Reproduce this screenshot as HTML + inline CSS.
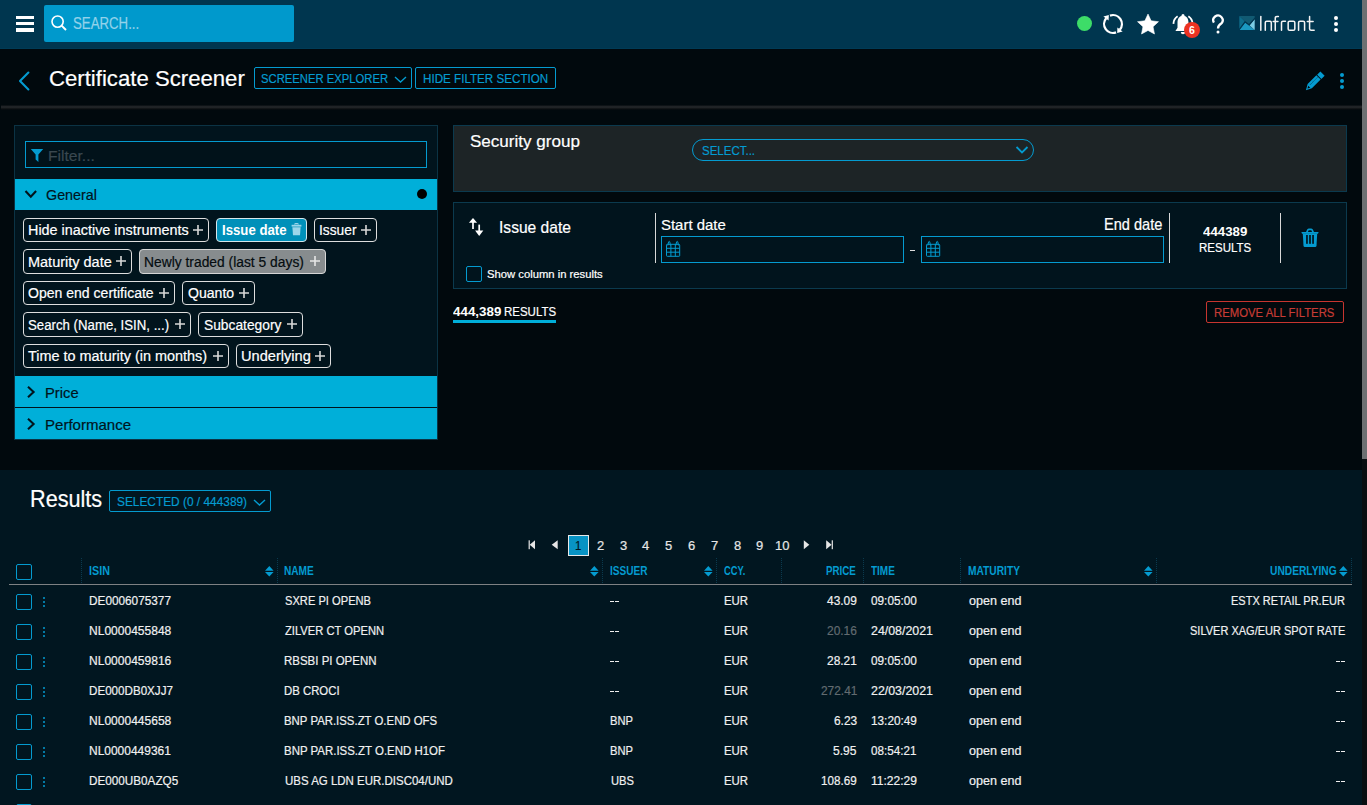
<!DOCTYPE html>
<html><head><meta charset="utf-8"><title>Certificate Screener</title>
<style>
html,body{margin:0;padding:0;}
body{width:1367px;height:805px;overflow:hidden;position:relative;background:#01090d;font-family:"Liberation Sans", sans-serif;}
.t{position:absolute;white-space:nowrap;line-height:normal;font-family:"Liberation Sans", sans-serif;-webkit-text-stroke:0.2px currentColor;}
.b{-webkit-text-stroke:0;}
svg{overflow:visible;}
</style></head><body>
<div style="position:absolute;left:0px;top:0px;width:1362px;height:49px;background:#00364f;"></div>
<div style="position:absolute;left:0px;top:48px;width:1362px;height:1px;background:#003b56;"></div>
<div style="position:absolute;left:16px;top:16.2px;width:18px;height:3.2px;background:#fff;"></div>
<div style="position:absolute;left:16px;top:22.3px;width:18px;height:3.2px;background:#fff;"></div>
<div style="position:absolute;left:16px;top:28.4px;width:18px;height:3.2px;background:#fff;"></div>
<div style="position:absolute;left:44px;top:5px;width:250px;height:37px;background:#0099cc;border-radius:2px;"></div>
<svg style="position:absolute;left:49px;top:14px;" width="20" height="20" viewBox="0 0 20 20"><circle cx="8.6" cy="7.6" r="5.6" fill="none" stroke="#fff" stroke-width="1.6"/><line x1="12.6" y1="11.6" x2="17" y2="16" stroke="#fff" stroke-width="2"/></svg>
<span class="t" style="left:73.40px;transform-origin:0 0;top:15px;font-size:15.7px;font-weight:400;color:#93d2ea;transform:scaleX(0.844);">SEARCH...</span>
<div style="position:absolute;left:1077px;top:16px;width:15px;height:15px;border-radius:50%;background:#3ddc68;"></div>
<svg style="position:absolute;left:1101px;top:12px;" width="24" height="24" viewBox="0 0 24 24"><path d="M8.96 3.64 A8.9 8.9 0 0 1 18.82 17.72" fill="none" stroke="#fff" stroke-width="2.3"/><path d="M15.04 20.36 A8.9 8.9 0 0 1 5.18 6.28" fill="none" stroke="#fff" stroke-width="2.3"/><path d="M16.41 15.45 L21.61 19.51 L16.18 21.10 Z" fill="#fff"/><path d="M7.59 8.55 L2.39 4.49 L7.82 2.90 Z" fill="#fff"/></svg>
<svg style="position:absolute;left:1137px;top:14px;" width="22" height="22" viewBox="0 0 22 22"><path d="M11.00 0.10 L14.12 6.81 L21.46 7.70 L16.04 12.74 L17.47 20.00 L11.00 16.40 L4.53 20.00 L5.96 12.74 L0.54 7.70 L7.88 6.81 Z" fill="#fff" stroke="#fff" stroke-width="0.6" stroke-linejoin="round"/></svg>
<svg style="position:absolute;left:1171px;top:12.8px;" width="26" height="24" viewBox="0 0 26 24"><path d="M12 2.8 C8.2 2.8 6.5 5.9 6.5 9.6 L6.5 14.8 L4.4 18 L19.6 18 L17.5 14.8 L17.5 9.6 C17.5 5.9 15.8 2.8 12 2.8 Z" fill="#fff"/><circle cx="12" cy="2.6" r="1.5" fill="#fff"/><path d="M2.41 10.86 A9.6 9.6 0 0 1 6.63 3.24" fill="none" stroke="#fff" stroke-width="1.8"/><path d="M17.37 3.24 A9.6 9.6 0 0 1 21.59 10.86" fill="none" stroke="#fff" stroke-width="1.8"/><path d="M9.8 19 A2.2 2.2 0 0 0 14.2 19 Z" fill="#fff"/></svg>
<div style="position:absolute;left:1184px;top:22px;width:16px;height:16px;border-radius:50%;background:#ec3222;"></div>
<span class="t b" style="left:1189.25px;transform-origin:0 0;top:23.799999999999997px;font-size:11.05px;font-weight:700;color:#fff;transform:scaleX(0.950);">6</span>
<svg style="position:absolute;left:1210px;top:12px;" width="16" height="24" viewBox="0 0 16 24"><path d="M3.9 10.6 A4.7 4.7 0 1 1 11.6 11.2 Q8 13.2 8 16.4" fill="none" stroke="#fff" stroke-width="2.3"/><circle cx="8" cy="19.9" r="1.5" fill="#fff"/></svg>
<svg style="position:absolute;left:1239px;top:16px;" width="16" height="14" viewBox="0 0 16 14"><path d="M0.3 0 H15.7 V2.2 L10 8.5 L6 5.5 Z" fill="#115a72"/><path d="M0.3 0 L6 5.5 L0.3 13.6 Z" fill="#0e6c8a"/><path d="M0.3 14 L6.2 6.6 L15.7 14 Z" fill="#1b99c1"/><path d="M15.7 3.2 V14 L10.6 9.6 Z" fill="#7ccee5"/><path d="M0 13.8 L6 5.8 L10 8.8 L16 2" fill="none" stroke="#00364f" stroke-width="1.1"/></svg>
<svg style="position:absolute;left:1258px;top:14px;" width="60" height="20" viewBox="0 0 60 20"><g transform="scale(1.04 1)" fill="none" stroke="#f4f4f4" stroke-width="1.45" stroke-linecap="round" stroke-linejoin="round"><path d="M2.7 2.5 V16.3"/><path d="M7 16.3 V8.5 Q7 7.2 8.4 7.2 H11.4 Q12.8 7.2 12.8 8.5 V16.3"/><path d="M16.6 16.3 V4.2 Q16.6 2.5 18.3 2.5 H19.6"/><path d="M14.6 7.5 H19.2"/><path d="M22.6 16.3 V8.5 Q22.6 7.2 24 7.2 H26.4"/><path d="M29 8.5 Q29 7.2 30.4 7.2 H34 Q35.4 7.2 35.4 8.5 V15 Q35.4 16.3 34 16.3 H30.4 Q29 16.3 29 15 Z"/><path d="M39 16.3 V8.5 Q39 7.2 40.4 7.2 H43.4 Q44.8 7.2 44.8 8.5 V16.3"/><path d="M49.6 2.5 V14.8 Q49.6 16.3 51.1 16.3 H54"/><path d="M47.4 7.5 H53"/></g></svg>
<div style="position:absolute;left:1333.8px;top:15.8px;width:4.4px;height:4.4px;border-radius:50%;background:#fff;"></div>
<div style="position:absolute;left:1333.8px;top:21.8px;width:4.4px;height:4.4px;border-radius:50%;background:#fff;"></div>
<div style="position:absolute;left:1333.8px;top:27.8px;width:4.4px;height:4.4px;border-radius:50%;background:#fff;"></div>
<div style="position:absolute;left:1362px;top:0px;width:5px;height:459px;background:#6d7072;"></div>
<div style="position:absolute;left:1362px;top:459px;width:5px;height:346px;background:#090e11;"></div>
<svg style="position:absolute;left:16px;top:70px;" width="16" height="22" viewBox="0 0 16 22"><path d="M12.4 2.6 L4 11 L12.4 19.4" fill="none" stroke="#049bd0" stroke-width="2.1" stroke-linecap="round" stroke-linejoin="round"/></svg>
<span class="t" style="left:49.02px;transform-origin:0 0;top:64.8px;font-size:22.67px;font-weight:400;color:#fff;transform:scaleX(0.978);">Certificate Screener</span>
<div style="position:absolute;left:254px;top:67px;width:158px;height:22px;border:1px solid #049bd0;border-radius:2px;box-sizing:border-box;"></div>
<span class="t" style="left:261.00px;transform-origin:0 0;top:71px;font-size:13.08px;font-weight:400;color:#049bd0;transform:scaleX(0.862);">SCREENER EXPLORER</span>
<svg style="position:absolute;left:394px;top:76px;" width="13" height="8" viewBox="0 0 13 8"><path d="M1 1 L6.5 6 L12 1" fill="none" stroke="#049bd0" stroke-width="1.4"/></svg>
<div style="position:absolute;left:415px;top:67px;width:141px;height:22px;border:1px solid #049bd0;border-radius:2px;box-sizing:border-box;"></div>
<span class="t" style="left:422.51px;transform-origin:0 0;top:71px;font-size:13.08px;font-weight:400;color:#049bd0;transform:scaleX(0.890);">HIDE FILTER SECTION</span>
<svg style="position:absolute;left:1302.6px;top:71.3px;" width="22" height="22" viewBox="0 0 22 22"><g transform="rotate(45 11 11)"><rect x="8" y="-1" width="6" height="4.6" fill="#049bd0"/><path d="M8 4.6 H14 V17 L11 22.5 L8 17 Z" fill="#049bd0"/><path d="M9.6 17.8 L11 20.2 L12.4 17.8 Z" fill="#01090d"/><line x1="10.2" y1="5.5" x2="10.2" y2="16" stroke="#01090d" stroke-width="0.6" stroke-dasharray="0.8 0.8"/></g></svg>
<div style="position:absolute;left:1340px;top:73px;width:4.2px;height:4.2px;border-radius:50%;background:#049bd0;"></div>
<div style="position:absolute;left:1340px;top:79px;width:4.2px;height:4.2px;border-radius:50%;background:#049bd0;"></div>
<div style="position:absolute;left:1340px;top:85px;width:4.2px;height:4.2px;border-radius:50%;background:#049bd0;"></div>
<div style="position:absolute;left:1px;top:105px;width:1361px;height:5px;background:linear-gradient(#01090d 0px,#1a1d20 1px,#25292c 2px,#1a1d1f 3px,#0a0e11 4px,#01090d 5px);"></div>
<div style="position:absolute;left:14px;top:125px;width:424px;height:315px;background:#01141d;border:1px solid #0b3344;box-sizing:border-box;"></div>
<div style="position:absolute;left:25px;top:141px;width:402px;height:27px;border:1px solid #049bd0;box-sizing:border-box;background:#01121a;"></div>
<svg style="position:absolute;left:30px;top:148px;" width="14" height="15" viewBox="0 0 14 15"><path d="M0.8 1 H13.2 L8.4 6.6 V14 L5.6 11.6 V6.6 Z" fill="#049bd0"/></svg>
<span class="t" style="left:47.69px;transform-origin:0 0;top:147px;font-size:15.41px;font-weight:400;color:#3a4850;transform:scaleX(1.013);">Filter...</span>
<div style="position:absolute;left:15px;top:179px;width:422px;height:31px;background:#00afd9;"></div>
<svg style="position:absolute;left:24px;top:189px;" width="14" height="11" viewBox="0 0 14 11"><path d="M1.5 2 L6.8 7.6 L12.1 2" fill="none" stroke="#01141d" stroke-width="2.1"/></svg>
<span class="t" style="left:45.70px;transform-origin:0 0;top:185.8px;font-size:15.41px;font-weight:400;color:#01141d;transform:scaleX(0.930);">General</span>
<div style="position:absolute;left:417px;top:189px;width:10px;height:10px;border-radius:50%;background:#000;"></div>
<div style="position:absolute;left:23px;top:218px;width:186px;height:24px;border:1px solid #dedede;border-radius:4px;box-sizing:border-box;"></div>
<span class="t" style="left:27.73px;transform-origin:0 0;top:222px;font-size:14.83px;font-weight:400;color:#fff;transform:scaleX(0.970);">Hide inactive instruments</span>
<svg style="position:absolute;left:193px;top:225px;" width="10" height="10" viewBox="0 0 10 10"><path d="M0 5 H10 M5 0 V10" stroke="#d8d8d8" stroke-width="1.6"/></svg>
<div style="position:absolute;left:216px;top:218px;width:91px;height:24px;background:#0090b9;border:1px solid #d6e6ea;border-radius:4px;box-sizing:border-box;"></div>
<span class="t b" style="left:221.50px;transform-origin:0 0;top:222px;font-size:14.83px;font-weight:700;color:#fff;transform:scaleX(0.891);">Issue date</span>
<svg style="position:absolute;left:291px;top:223px;" width="11" height="13" viewBox="0 0 11 13"><path d="M3.6 1.6 Q3.6 0.6 4.6 0.6 H6.4 Q7.4 0.6 7.4 1.6" fill="none" stroke="#9cd6ea" stroke-width="1.1"/><rect x="0.6" y="1.8" width="9.8" height="1.8" fill="#9cd6ea"/><path d="M1.4 4.2 H9.6 L9 12.2 H2 Z" fill="#9cd6ea"/></svg>
<div style="position:absolute;left:314px;top:218px;width:63px;height:24px;border:1px solid #dedede;border-radius:4px;box-sizing:border-box;"></div>
<span class="t" style="left:318.87px;transform-origin:0 0;top:222px;font-size:14.83px;font-weight:400;color:#fff;transform:scaleX(0.928);">Issuer</span>
<svg style="position:absolute;left:361px;top:225px;" width="10" height="10" viewBox="0 0 10 10"><path d="M0 5 H10 M5 0 V10" stroke="#d8d8d8" stroke-width="1.6"/></svg>
<div style="position:absolute;left:23px;top:249px;width:109px;height:25px;border:1px solid #dedede;border-radius:4px;box-sizing:border-box;"></div>
<span class="t" style="left:27.72px;transform-origin:0 0;top:253.5px;font-size:14.83px;font-weight:400;color:#fff;transform:scaleX(0.977);">Maturity date</span>
<svg style="position:absolute;left:116px;top:256px;" width="10" height="10" viewBox="0 0 10 10"><path d="M0 5 H10 M5 0 V10" stroke="#d8d8d8" stroke-width="1.6"/></svg>
<div style="position:absolute;left:139px;top:249px;width:187px;height:25px;background:#878c8e;border:1px solid #d6d6d6;border-radius:4px;box-sizing:border-box;"></div>
<span class="t" style="left:144.07px;transform-origin:0 0;top:253.5px;font-size:14.83px;font-weight:400;color:#050c10;transform:scaleX(0.933);">Newly traded (last 5 days)</span>
<svg style="position:absolute;left:310px;top:256px;" width="10" height="10" viewBox="0 0 10 10"><path d="M0 5 H10 M5 0 V10" stroke="#e6e6e6" stroke-width="1.6"/></svg>
<div style="position:absolute;left:23px;top:281px;width:152px;height:24px;border:1px solid #dedede;border-radius:4px;box-sizing:border-box;"></div>
<span class="t" style="left:28.30px;transform-origin:0 0;top:285px;font-size:14.83px;font-weight:400;color:#fff;transform:scaleX(0.947);">Open end certificate</span>
<svg style="position:absolute;left:159px;top:288px;" width="10" height="10" viewBox="0 0 10 10"><path d="M0 5 H10 M5 0 V10" stroke="#d8d8d8" stroke-width="1.6"/></svg>
<div style="position:absolute;left:182px;top:281px;width:73px;height:24px;border:1px solid #dedede;border-radius:4px;box-sizing:border-box;"></div>
<span class="t" style="left:187.60px;transform-origin:0 0;top:285px;font-size:14.83px;font-weight:400;color:#fff;transform:scaleX(0.948);">Quanto</span>
<svg style="position:absolute;left:239px;top:288px;" width="10" height="10" viewBox="0 0 10 10"><path d="M0 5 H10 M5 0 V10" stroke="#d8d8d8" stroke-width="1.6"/></svg>
<div style="position:absolute;left:23px;top:312px;width:168px;height:25px;border:1px solid #dedede;border-radius:4px;box-sizing:border-box;"></div>
<span class="t" style="left:28.30px;transform-origin:0 0;top:316.5px;font-size:14.83px;font-weight:400;color:#fff;transform:scaleX(0.892);">Search (Name, ISIN, ...)</span>
<svg style="position:absolute;left:175px;top:319px;" width="10" height="10" viewBox="0 0 10 10"><path d="M0 5 H10 M5 0 V10" stroke="#d8d8d8" stroke-width="1.6"/></svg>
<div style="position:absolute;left:198px;top:312px;width:105px;height:25px;border:1px solid #dedede;border-radius:4px;box-sizing:border-box;"></div>
<span class="t" style="left:203.80px;transform-origin:0 0;top:316.5px;font-size:14.83px;font-weight:400;color:#fff;transform:scaleX(0.930);">Subcategory</span>
<svg style="position:absolute;left:287px;top:319px;" width="10" height="10" viewBox="0 0 10 10"><path d="M0 5 H10 M5 0 V10" stroke="#d8d8d8" stroke-width="1.6"/></svg>
<div style="position:absolute;left:23px;top:344px;width:206px;height:24px;border:1px solid #dedede;border-radius:4px;box-sizing:border-box;"></div>
<span class="t" style="left:28.30px;transform-origin:0 0;top:348px;font-size:14.83px;font-weight:400;color:#fff;transform:scaleX(0.973);">Time to maturity (in months)</span>
<svg style="position:absolute;left:213px;top:351px;" width="10" height="10" viewBox="0 0 10 10"><path d="M0 5 H10 M5 0 V10" stroke="#d8d8d8" stroke-width="1.6"/></svg>
<div style="position:absolute;left:236px;top:344px;width:95px;height:24px;border:1px solid #dedede;border-radius:4px;box-sizing:border-box;"></div>
<span class="t" style="left:240.52px;transform-origin:0 0;top:348px;font-size:14.83px;font-weight:400;color:#fff;transform:scaleX(0.984);">Underlying</span>
<svg style="position:absolute;left:315px;top:351px;" width="10" height="10" viewBox="0 0 10 10"><path d="M0 5 H10 M5 0 V10" stroke="#d8d8d8" stroke-width="1.6"/></svg>
<div style="position:absolute;left:15px;top:376px;width:422px;height:31px;background:#00afd9;"></div>
<div style="position:absolute;left:15px;top:408px;width:422px;height:31px;background:#00afd9;"></div>
<svg style="position:absolute;left:25px;top:385px;" width="12" height="14" viewBox="0 0 12 14"><path d="M3 1.8 L8.6 7 L3 12.2" fill="none" stroke="#01141d" stroke-width="2.1"/></svg>
<span class="t" style="left:44.71px;transform-origin:0 0;top:383.8px;font-size:14.97px;font-weight:400;color:#01141d;transform:scaleX(0.985);">Price</span>
<svg style="position:absolute;left:25px;top:417px;" width="12" height="14" viewBox="0 0 12 14"><path d="M3 1.8 L8.6 7 L3 12.2" fill="none" stroke="#01141d" stroke-width="2.1"/></svg>
<span class="t" style="left:44.69px;transform-origin:0 0;top:415.8px;font-size:14.97px;font-weight:400;color:#01141d;transform:scaleX(1.005);">Performance</span>
<div style="position:absolute;left:453px;top:125px;width:894px;height:67px;background:#1d2426;border:1px solid #0b3a4e;box-sizing:border-box;"></div>
<span class="t" style="left:469.50px;transform-origin:0 0;top:130.9px;font-size:17.3px;font-weight:400;color:#fff;transform:scaleX(0.986);">Security group</span>
<div style="position:absolute;left:692px;top:139px;width:342px;height:22px;border:1px solid #049bd0;border-radius:11px;box-sizing:border-box;"></div>
<span class="t" style="left:701.50px;transform-origin:0 0;top:143.1px;font-size:12.94px;font-weight:400;color:#049bd0;transform:scaleX(0.889);">SELECT...</span>
<svg style="position:absolute;left:1015px;top:145px;" width="14" height="10" viewBox="0 0 14 10"><path d="M1.5 2 L7 7.5 L12.5 2" fill="none" stroke="#049bd0" stroke-width="1.8"/></svg>
<div style="position:absolute;left:453px;top:202px;width:894px;height:87px;background:#01141d;border:1px solid #0b3a4e;box-sizing:border-box;"></div>
<svg style="position:absolute;left:468px;top:217px;" width="16" height="20" viewBox="0 0 16 20"><g fill="#fff"><rect x="4.15" y="4" width="1.7" height="8"/><path d="M0.9 5.8 L5 1 L9.1 5.8 Z"/><rect x="10.35" y="7.6" width="1.7" height="8"/><path d="M7.1 13.6 L11.2 19 L15.3 13.6 Z"/></g></svg>
<span class="t" style="left:498.72px;transform-origin:0 0;top:218.7px;font-size:15.99px;font-weight:400;color:#fff;transform:scaleX(0.976);">Issue date</span>
<div style="position:absolute;left:466px;top:266px;width:16px;height:16px;border:1.5px solid #049bd0;border-radius:2px;box-sizing:border-box;"></div>
<span class="t" style="left:486.50px;transform-origin:0 0;top:267.5px;font-size:11.48px;font-weight:400;color:#fff;transform:scaleX(0.981);">Show column in results</span>
<div style="position:absolute;left:655px;top:213px;width:1px;height:50px;background:#d8d8d8;"></div>
<span class="t" style="left:661.40px;transform-origin:0 0;top:215.8px;font-size:15.26px;font-weight:400;color:#fff;transform:scaleX(0.980);">Start date</span>
<div style="position:absolute;left:661px;top:236px;width:243px;height:27px;border:1px solid #049bd0;box-sizing:border-box;"></div>
<svg style="position:absolute;left:666px;top:240px;" width="15" height="17" viewBox="0 0 15 17"><g fill="none" stroke="#049bd0" stroke-width="1"><rect x="0.5" y="4.3" width="13.2" height="12" rx="0.8"/><line x1="0.5" y1="8.3" x2="13.7" y2="8.3"/><line x1="0.5" y1="12.2" x2="13.7" y2="12.2"/><line x1="4.9" y1="4.3" x2="4.9" y2="16.3"/><line x1="9.3" y1="4.3" x2="9.3" y2="16.3"/><path d="M1.8 5.5 L2.6 1.8 Q3.2 0.8 3.8 1.8 L4.4 5.5"/><path d="M9.8 5.5 L10.6 1.8 Q11.2 0.8 11.8 1.8 L12.4 5.5"/></g></svg>
<div style="position:absolute;left:910px;top:250px;width:5px;height:1.2px;background:#ddd;"></div>
<span class="t" style="left:1104.37px;transform-origin:0 0;top:216px;font-size:15.7px;font-weight:400;color:#fff;transform:scaleX(0.929);">End date</span>
<div style="position:absolute;left:921px;top:236px;width:243px;height:27px;border:1px solid #049bd0;box-sizing:border-box;"></div>
<svg style="position:absolute;left:926px;top:240px;" width="15" height="17" viewBox="0 0 15 17"><g fill="none" stroke="#049bd0" stroke-width="1"><rect x="0.5" y="4.3" width="13.2" height="12" rx="0.8"/><line x1="0.5" y1="8.3" x2="13.7" y2="8.3"/><line x1="0.5" y1="12.2" x2="13.7" y2="12.2"/><line x1="4.9" y1="4.3" x2="4.9" y2="16.3"/><line x1="9.3" y1="4.3" x2="9.3" y2="16.3"/><path d="M1.8 5.5 L2.6 1.8 Q3.2 0.8 3.8 1.8 L4.4 5.5"/><path d="M9.8 5.5 L10.6 1.8 Q11.2 0.8 11.8 1.8 L12.4 5.5"/></g></svg>
<div style="position:absolute;left:1169px;top:213px;width:1px;height:50px;background:#d8d8d8;"></div>
<span class="t b" style="left:1202.90px;transform-origin:0 0;top:224px;font-size:13.08px;font-weight:700;color:#fff;transform:scaleX(1.015);">444389</span>
<span class="t" style="left:1198.60px;transform-origin:0 0;top:239.7px;font-size:12.79px;font-weight:400;color:#fff;transform:scaleX(0.899);">RESULTS</span>
<div style="position:absolute;left:1280px;top:213px;width:1px;height:50px;background:#d8d8d8;"></div>
<svg style="position:absolute;left:1300px;top:228px;" width="20" height="20" viewBox="0 0 20 20"><path d="M6.8 4.4 L7.9 1.9 Q8.3 1.3 9 1.3 H11 Q11.7 1.3 12.1 1.9 L13.2 4.4" fill="none" stroke="#049bd0" stroke-width="1.7"/><path d="M1.4 3.9 H18.6 L18 5.7 H2 Z" fill="#049bd0"/><path d="M2.8 5.5 H17.2 L16.5 17.8 Q16.4 19 15.2 19 H4.8 Q3.6 19 3.5 17.8 Z" fill="#049bd0"/><g fill="#01141d"><rect x="6.1" y="7" width="1.7" height="8.8"/><rect x="9.15" y="7" width="1.7" height="8.8"/><rect x="12.2" y="7" width="1.7" height="8.8"/></g></svg>
<span class="t b" style="left:453.00px;transform-origin:0 0;top:305px;font-size:12.5px;font-weight:700;color:#fff;transform:scaleX(1.072);">444,389</span>
<span class="t" style="left:504.08px;transform-origin:0 0;top:305px;font-size:12.5px;font-weight:400;color:#fff;transform:scaleX(0.919);">RESULTS</span>
<div style="position:absolute;left:453px;top:320px;width:103px;height:3px;background:#00afd9;"></div>
<div style="position:absolute;left:1206px;top:301px;width:138px;height:22px;border:1px solid #c7352f;border-radius:2px;box-sizing:border-box;"></div>
<span class="t" style="left:1214.02px;transform-origin:0 0;top:304.9px;font-size:12.94px;font-weight:400;color:#c63c35;transform:scaleX(0.877);">REMOVE ALL FILTERS</span>
<div style="position:absolute;left:0px;top:470px;width:1362px;height:335px;background:#011620;"></div>
<span class="t" style="left:29.57px;transform-origin:0 0;top:486px;font-size:23.26px;font-weight:400;color:#fff;transform:scaleX(0.931);">Results</span>
<div style="position:absolute;left:109px;top:490px;width:162px;height:22px;border:1px solid #049bd0;border-radius:2px;box-sizing:border-box;"></div>
<span class="t" style="left:116.60px;transform-origin:0 0;top:494px;font-size:12.94px;font-weight:400;color:#049bd0;transform:scaleX(0.918);">SELECTED (0 / 444389)</span>
<svg style="position:absolute;left:253px;top:499px;" width="13" height="8" viewBox="0 0 13 8"><path d="M1 1 L6.5 6 L12 1" fill="none" stroke="#049bd0" stroke-width="1.4"/></svg>
<svg style="position:absolute;left:520px;top:536px;" width="320" height="16" viewBox="0 0 320 16"><g fill="#e6e6e6"><rect x="8.6" y="4.3" width="1.2" height="8.9"/><path d="M15 4.3 L9.7 8.75 L15 13.2 Z"/><path d="M37.7 4.3 L31.7 8.75 L37.7 13.2 Z"/><path d="M283.8 4.3 L289.3 8.75 L283.8 13.2 Z"/><path d="M306.2 4.3 L311.6 8.75 L306.2 13.2 Z"/><rect x="311.7" y="4.3" width="1.2" height="8.9"/></g></svg>
<div style="position:absolute;left:568px;top:535px;width:21px;height:21px;background:#0893c4;border:1px solid #e8e8e8;box-sizing:border-box;"></div>
<span class="t" style="left:575.20px;transform-origin:0 0;top:537.5px;font-size:13.37px;font-weight:400;color:#01141d;transform:scaleX(0.850);">1</span>
<span class="t" style="left:596.97px;transform-origin:0 0;top:538px;font-size:13.66px;font-weight:400;color:#e6e6e6;transform:scaleX(0.950);">2</span>
<span class="t" style="left:619.67px;transform-origin:0 0;top:538px;font-size:13.66px;font-weight:400;color:#e6e6e6;transform:scaleX(0.950);">3</span>
<span class="t" style="left:642.10px;transform-origin:0 0;top:538px;font-size:13.66px;font-weight:400;color:#e6e6e6;transform:scaleX(0.950);">4</span>
<span class="t" style="left:665.10px;transform-origin:0 0;top:538px;font-size:13.66px;font-weight:400;color:#e6e6e6;transform:scaleX(0.950);">5</span>
<span class="t" style="left:688.47px;transform-origin:0 0;top:538px;font-size:13.66px;font-weight:400;color:#e6e6e6;transform:scaleX(0.950);">6</span>
<span class="t" style="left:711.47px;transform-origin:0 0;top:538px;font-size:13.66px;font-weight:400;color:#e6e6e6;transform:scaleX(0.950);">7</span>
<span class="t" style="left:733.97px;transform-origin:0 0;top:538px;font-size:13.66px;font-weight:400;color:#e6e6e6;transform:scaleX(0.950);">8</span>
<span class="t" style="left:756.47px;transform-origin:0 0;top:538px;font-size:13.66px;font-weight:400;color:#e6e6e6;transform:scaleX(0.950);">9</span>
<span class="t" style="left:775.42px;transform-origin:0 0;top:538px;font-size:13.66px;font-weight:400;color:#e6e6e6;transform:scaleX(0.950);">10</span>
<div style="position:absolute;left:16px;top:564px;width:16px;height:16px;border:1.5px solid #049bd0;border-radius:2px;box-sizing:border-box;"></div>
<div style="position:absolute;left:81px;top:558px;width:1px;height:25px;background-image:linear-gradient(#0b3a4e 50%, transparent 50%);background-size:1px 2px;"></div>
<div style="position:absolute;left:277px;top:558px;width:1px;height:25px;background-image:linear-gradient(#0b3a4e 50%, transparent 50%);background-size:1px 2px;"></div>
<div style="position:absolute;left:602px;top:558px;width:1px;height:25px;background-image:linear-gradient(#0b3a4e 50%, transparent 50%);background-size:1px 2px;"></div>
<div style="position:absolute;left:716px;top:558px;width:1px;height:25px;background-image:linear-gradient(#0b3a4e 50%, transparent 50%);background-size:1px 2px;"></div>
<div style="position:absolute;left:781px;top:558px;width:1px;height:25px;background-image:linear-gradient(#0b3a4e 50%, transparent 50%);background-size:1px 2px;"></div>
<div style="position:absolute;left:863px;top:558px;width:1px;height:25px;background-image:linear-gradient(#0b3a4e 50%, transparent 50%);background-size:1px 2px;"></div>
<div style="position:absolute;left:960px;top:558px;width:1px;height:25px;background-image:linear-gradient(#0b3a4e 50%, transparent 50%);background-size:1px 2px;"></div>
<div style="position:absolute;left:1156px;top:558px;width:1px;height:25px;background-image:linear-gradient(#0b3a4e 50%, transparent 50%);background-size:1px 2px;"></div>
<div style="position:absolute;left:1351px;top:558px;width:1px;height:25px;background-image:linear-gradient(#0b3a4e 50%, transparent 50%);background-size:1px 2px;"></div>
<div style="position:absolute;left:9px;top:584px;width:1343px;height:1px;background:#7e8183;"></div>
<span class="t b" style="left:88.80px;transform-origin:0 0;top:563.2px;font-size:12.79px;font-weight:700;color:#049bd0;transform:scaleX(0.841);">ISIN</span>
<span class="t b" style="left:284.00px;transform-origin:0 0;top:563.2px;font-size:12.79px;font-weight:700;color:#049bd0;transform:scaleX(0.792);">NAME</span>
<span class="t b" style="left:609.60px;transform-origin:0 0;top:563.2px;font-size:12.79px;font-weight:700;color:#049bd0;transform:scaleX(0.790);">ISSUER</span>
<span class="t b" style="left:723.70px;transform-origin:0 0;top:563.2px;font-size:12.79px;font-weight:700;color:#049bd0;transform:scaleX(0.732);">CCY.</span>
<span class="t b" style="left:825.80px;transform-origin:0 0;top:563.2px;font-size:12.79px;font-weight:700;color:#049bd0;transform:scaleX(0.764);">PRICE</span>
<span class="t b" style="left:870.50px;transform-origin:0 0;top:563.2px;font-size:12.79px;font-weight:700;color:#049bd0;transform:scaleX(0.781);">TIME</span>
<span class="t b" style="left:967.50px;transform-origin:0 0;top:563.2px;font-size:12.79px;font-weight:700;color:#049bd0;transform:scaleX(0.798);">MATURITY</span>
<span class="t b" style="left:1270.30px;transform-origin:0 0;top:563.2px;font-size:12.79px;font-weight:700;color:#049bd0;transform:scaleX(0.800);">UNDERLYING</span>
<svg style="position:absolute;left:264.8px;top:565.8px;" width="9" height="11" viewBox="0 0 9 11"><path d="M0 4.7 L4.3 0 L8.6 4.7 Z M0 6 L4.3 10.6 L8.6 6 Z" fill="#049bd0"/></svg>
<svg style="position:absolute;left:590px;top:565.8px;" width="9" height="11" viewBox="0 0 9 11"><path d="M0 4.7 L4.3 0 L8.6 4.7 Z M0 6 L4.3 10.6 L8.6 6 Z" fill="#049bd0"/></svg>
<svg style="position:absolute;left:704px;top:565.8px;" width="9" height="11" viewBox="0 0 9 11"><path d="M0 4.7 L4.3 0 L8.6 4.7 Z M0 6 L4.3 10.6 L8.6 6 Z" fill="#049bd0"/></svg>
<svg style="position:absolute;left:1143.8px;top:565.8px;" width="9" height="11" viewBox="0 0 9 11"><path d="M0 4.7 L4.3 0 L8.6 4.7 Z M0 6 L4.3 10.6 L8.6 6 Z" fill="#049bd0"/></svg>
<svg style="position:absolute;left:1338.8px;top:565.8px;" width="9" height="11" viewBox="0 0 9 11"><path d="M0 4.7 L4.3 0 L8.6 4.7 Z M0 6 L4.3 10.6 L8.6 6 Z" fill="#049bd0"/></svg>
<div style="position:absolute;left:16px;top:594px;width:16px;height:16px;border:1.5px solid #049bd0;border-radius:2px;box-sizing:border-box;"></div>
<div style="position:absolute;left:42.8px;top:596.8px;width:2.4px;height:2.4px;border-radius:50%;background:#049bd0;"></div>
<div style="position:absolute;left:42.8px;top:600.8px;width:2.4px;height:2.4px;border-radius:50%;background:#049bd0;"></div>
<div style="position:absolute;left:42.8px;top:604.8px;width:2.4px;height:2.4px;border-radius:50%;background:#049bd0;"></div>
<span class="t" style="left:89.37px;transform-origin:0 0;top:594px;font-size:12.65px;font-weight:400;color:#f0f0f0;transform:scaleX(0.933);">DE0006075377</span>
<span class="t" style="left:284.90px;transform-origin:0 0;top:594px;font-size:12.65px;font-weight:400;color:#f0f0f0;transform:scaleX(0.881);">SXRE PI OPENB</span>
<div style="position:absolute;left:610.3px;top:601px;width:4.1px;height:1px;background:#f0f0f0;"></div>
<div style="position:absolute;left:615px;top:601px;width:4px;height:1px;background:#f0f0f0;"></div>
<span class="t" style="left:723.90px;transform-origin:0 0;top:594px;font-size:12.65px;font-weight:400;color:#f0f0f0;transform:scaleX(0.904);">EUR</span>
<span class="t" style="left:827.00px;transform-origin:0 0;top:594px;font-size:12.65px;font-weight:400;color:#f0f0f0;transform:scaleX(0.943);">43.09</span>
<span class="t" style="left:871.00px;transform-origin:0 0;top:594px;font-size:12.65px;font-weight:400;color:#f0f0f0;transform:scaleX(0.933);">09:05:00</span>
<span class="t" style="left:968.60px;transform-origin:0 0;top:594px;font-size:12.65px;font-weight:400;color:#f0f0f0;transform:scaleX(0.994);">open end</span>
<span class="t" style="left:1230.83px;transform-origin:0 0;top:594px;font-size:12.65px;font-weight:400;color:#f0f0f0;transform:scaleX(0.872);">ESTX RETAIL PR.EUR</span>
<div style="position:absolute;left:16px;top:624px;width:16px;height:16px;border:1.5px solid #049bd0;border-radius:2px;box-sizing:border-box;"></div>
<div style="position:absolute;left:42.8px;top:626.8px;width:2.4px;height:2.4px;border-radius:50%;background:#049bd0;"></div>
<div style="position:absolute;left:42.8px;top:630.8px;width:2.4px;height:2.4px;border-radius:50%;background:#049bd0;"></div>
<div style="position:absolute;left:42.8px;top:634.8px;width:2.4px;height:2.4px;border-radius:50%;background:#049bd0;"></div>
<span class="t" style="left:89.35px;transform-origin:0 0;top:624px;font-size:12.65px;font-weight:400;color:#f0f0f0;transform:scaleX(0.952);">NL0000455848</span>
<span class="t" style="left:284.90px;transform-origin:0 0;top:624px;font-size:12.65px;font-weight:400;color:#f0f0f0;transform:scaleX(0.886);">ZILVER CT OPENN</span>
<div style="position:absolute;left:610.3px;top:631px;width:4.1px;height:1px;background:#f0f0f0;"></div>
<div style="position:absolute;left:615px;top:631px;width:4px;height:1px;background:#f0f0f0;"></div>
<span class="t" style="left:723.90px;transform-origin:0 0;top:624px;font-size:12.65px;font-weight:400;color:#f0f0f0;transform:scaleX(0.904);">EUR</span>
<span class="t" style="left:827.00px;transform-origin:0 0;top:624px;font-size:12.65px;font-weight:400;color:#626b70;transform:scaleX(0.943);">20.16</span>
<span class="t" style="left:871.00px;transform-origin:0 0;top:624px;font-size:12.65px;font-weight:400;color:#f0f0f0;transform:scaleX(0.980);">24/08/2021</span>
<span class="t" style="left:968.60px;transform-origin:0 0;top:624px;font-size:12.65px;font-weight:400;color:#f0f0f0;transform:scaleX(0.994);">open end</span>
<span class="t" style="left:1189.70px;transform-origin:0 0;top:624px;font-size:12.65px;font-weight:400;color:#f0f0f0;transform:scaleX(0.871);">SILVER XAG/EUR SPOT RATE</span>
<div style="position:absolute;left:16px;top:654px;width:16px;height:16px;border:1.5px solid #049bd0;border-radius:2px;box-sizing:border-box;"></div>
<div style="position:absolute;left:42.8px;top:656.8px;width:2.4px;height:2.4px;border-radius:50%;background:#049bd0;"></div>
<div style="position:absolute;left:42.8px;top:660.8px;width:2.4px;height:2.4px;border-radius:50%;background:#049bd0;"></div>
<div style="position:absolute;left:42.8px;top:664.8px;width:2.4px;height:2.4px;border-radius:50%;background:#049bd0;"></div>
<span class="t" style="left:89.35px;transform-origin:0 0;top:654px;font-size:12.65px;font-weight:400;color:#f0f0f0;transform:scaleX(0.952);">NL0000459816</span>
<span class="t" style="left:283.99px;transform-origin:0 0;top:654px;font-size:12.65px;font-weight:400;color:#f0f0f0;transform:scaleX(0.908);">RBSBI PI OPENN</span>
<div style="position:absolute;left:610.3px;top:661px;width:4.1px;height:1px;background:#f0f0f0;"></div>
<div style="position:absolute;left:615px;top:661px;width:4px;height:1px;background:#f0f0f0;"></div>
<span class="t" style="left:723.90px;transform-origin:0 0;top:654px;font-size:12.65px;font-weight:400;color:#f0f0f0;transform:scaleX(0.904);">EUR</span>
<span class="t" style="left:827.00px;transform-origin:0 0;top:654px;font-size:12.65px;font-weight:400;color:#f0f0f0;transform:scaleX(0.943);">28.21</span>
<span class="t" style="left:871.00px;transform-origin:0 0;top:654px;font-size:12.65px;font-weight:400;color:#f0f0f0;transform:scaleX(0.933);">09:05:00</span>
<span class="t" style="left:968.60px;transform-origin:0 0;top:654px;font-size:12.65px;font-weight:400;color:#f0f0f0;transform:scaleX(0.994);">open end</span>
<div style="position:absolute;left:1336.3px;top:661px;width:4.1px;height:1px;background:#f0f0f0;"></div>
<div style="position:absolute;left:1341px;top:661px;width:4px;height:1px;background:#f0f0f0;"></div>
<div style="position:absolute;left:16px;top:684px;width:16px;height:16px;border:1.5px solid #049bd0;border-radius:2px;box-sizing:border-box;"></div>
<div style="position:absolute;left:42.8px;top:686.8px;width:2.4px;height:2.4px;border-radius:50%;background:#049bd0;"></div>
<div style="position:absolute;left:42.8px;top:690.8px;width:2.4px;height:2.4px;border-radius:50%;background:#049bd0;"></div>
<div style="position:absolute;left:42.8px;top:694.8px;width:2.4px;height:2.4px;border-radius:50%;background:#049bd0;"></div>
<span class="t" style="left:89.38px;transform-origin:0 0;top:684px;font-size:12.65px;font-weight:400;color:#f0f0f0;transform:scaleX(0.919);">DE000DB0XJJ7</span>
<span class="t" style="left:284.00px;transform-origin:0 0;top:684px;font-size:12.65px;font-weight:400;color:#f0f0f0;transform:scaleX(0.899);">DB CROCI</span>
<div style="position:absolute;left:610.3px;top:691px;width:4.1px;height:1px;background:#f0f0f0;"></div>
<div style="position:absolute;left:615px;top:691px;width:4px;height:1px;background:#f0f0f0;"></div>
<span class="t" style="left:723.90px;transform-origin:0 0;top:684px;font-size:12.65px;font-weight:400;color:#f0f0f0;transform:scaleX(0.904);">EUR</span>
<span class="t" style="left:820.50px;transform-origin:0 0;top:684px;font-size:12.65px;font-weight:400;color:#626b70;transform:scaleX(0.940);">272.41</span>
<span class="t" style="left:871.00px;transform-origin:0 0;top:684px;font-size:12.65px;font-weight:400;color:#f0f0f0;transform:scaleX(0.980);">22/03/2021</span>
<span class="t" style="left:968.60px;transform-origin:0 0;top:684px;font-size:12.65px;font-weight:400;color:#f0f0f0;transform:scaleX(0.994);">open end</span>
<div style="position:absolute;left:1336.3px;top:691px;width:4.1px;height:1px;background:#f0f0f0;"></div>
<div style="position:absolute;left:1341px;top:691px;width:4px;height:1px;background:#f0f0f0;"></div>
<div style="position:absolute;left:16px;top:714px;width:16px;height:16px;border:1.5px solid #049bd0;border-radius:2px;box-sizing:border-box;"></div>
<div style="position:absolute;left:42.8px;top:716.8px;width:2.4px;height:2.4px;border-radius:50%;background:#049bd0;"></div>
<div style="position:absolute;left:42.8px;top:720.8px;width:2.4px;height:2.4px;border-radius:50%;background:#049bd0;"></div>
<div style="position:absolute;left:42.8px;top:724.8px;width:2.4px;height:2.4px;border-radius:50%;background:#049bd0;"></div>
<span class="t" style="left:89.35px;transform-origin:0 0;top:714px;font-size:12.65px;font-weight:400;color:#f0f0f0;transform:scaleX(0.952);">NL0000445658</span>
<span class="t" style="left:284.00px;transform-origin:0 0;top:714px;font-size:12.65px;font-weight:400;color:#f0f0f0;transform:scaleX(0.901);">BNP PAR.ISS.ZT O.END OFS</span>
<span class="t" style="left:609.82px;transform-origin:0 0;top:714px;font-size:12.65px;font-weight:400;color:#f0f0f0;transform:scaleX(0.885);">BNP</span>
<span class="t" style="left:723.90px;transform-origin:0 0;top:714px;font-size:12.65px;font-weight:400;color:#f0f0f0;transform:scaleX(0.904);">EUR</span>
<span class="t" style="left:833.70px;transform-origin:0 0;top:714px;font-size:12.65px;font-weight:400;color:#f0f0f0;transform:scaleX(0.940);">6.23</span>
<span class="t" style="left:871.00px;transform-origin:0 0;top:714px;font-size:12.65px;font-weight:400;color:#f0f0f0;transform:scaleX(0.933);">13:20:49</span>
<span class="t" style="left:968.60px;transform-origin:0 0;top:714px;font-size:12.65px;font-weight:400;color:#f0f0f0;transform:scaleX(0.994);">open end</span>
<div style="position:absolute;left:1336.3px;top:721px;width:4.1px;height:1px;background:#f0f0f0;"></div>
<div style="position:absolute;left:1341px;top:721px;width:4px;height:1px;background:#f0f0f0;"></div>
<div style="position:absolute;left:16px;top:744px;width:16px;height:16px;border:1.5px solid #049bd0;border-radius:2px;box-sizing:border-box;"></div>
<div style="position:absolute;left:42.8px;top:746.8px;width:2.4px;height:2.4px;border-radius:50%;background:#049bd0;"></div>
<div style="position:absolute;left:42.8px;top:750.8px;width:2.4px;height:2.4px;border-radius:50%;background:#049bd0;"></div>
<div style="position:absolute;left:42.8px;top:754.8px;width:2.4px;height:2.4px;border-radius:50%;background:#049bd0;"></div>
<span class="t" style="left:89.35px;transform-origin:0 0;top:744px;font-size:12.65px;font-weight:400;color:#f0f0f0;transform:scaleX(0.947);">NL0000449361</span>
<span class="t" style="left:283.99px;transform-origin:0 0;top:744px;font-size:12.65px;font-weight:400;color:#f0f0f0;transform:scaleX(0.906);">BNP PAR.ISS.ZT O.END H1OF</span>
<span class="t" style="left:609.82px;transform-origin:0 0;top:744px;font-size:12.65px;font-weight:400;color:#f0f0f0;transform:scaleX(0.885);">BNP</span>
<span class="t" style="left:723.90px;transform-origin:0 0;top:744px;font-size:12.65px;font-weight:400;color:#f0f0f0;transform:scaleX(0.904);">EUR</span>
<span class="t" style="left:833.40px;transform-origin:0 0;top:744px;font-size:12.65px;font-weight:400;color:#f0f0f0;transform:scaleX(0.952);">5.95</span>
<span class="t" style="left:871.00px;transform-origin:0 0;top:744px;font-size:12.65px;font-weight:400;color:#f0f0f0;transform:scaleX(0.923);">08:54:21</span>
<span class="t" style="left:968.60px;transform-origin:0 0;top:744px;font-size:12.65px;font-weight:400;color:#f0f0f0;transform:scaleX(0.994);">open end</span>
<div style="position:absolute;left:1336.3px;top:751px;width:4.1px;height:1px;background:#f0f0f0;"></div>
<div style="position:absolute;left:1341px;top:751px;width:4px;height:1px;background:#f0f0f0;"></div>
<div style="position:absolute;left:16px;top:774px;width:16px;height:16px;border:1.5px solid #049bd0;border-radius:2px;box-sizing:border-box;"></div>
<div style="position:absolute;left:42.8px;top:776.8px;width:2.4px;height:2.4px;border-radius:50%;background:#049bd0;"></div>
<div style="position:absolute;left:42.8px;top:780.8px;width:2.4px;height:2.4px;border-radius:50%;background:#049bd0;"></div>
<div style="position:absolute;left:42.8px;top:784.8px;width:2.4px;height:2.4px;border-radius:50%;background:#049bd0;"></div>
<span class="t" style="left:89.37px;transform-origin:0 0;top:774px;font-size:12.65px;font-weight:400;color:#f0f0f0;transform:scaleX(0.927);">DE000UB0AZQ5</span>
<span class="t" style="left:284.90px;transform-origin:0 0;top:774px;font-size:12.65px;font-weight:400;color:#f0f0f0;transform:scaleX(0.908);">UBS AG LDN EUR.DISC04/UND</span>
<span class="t" style="left:610.70px;transform-origin:0 0;top:774px;font-size:12.65px;font-weight:400;color:#f0f0f0;transform:scaleX(0.885);">UBS</span>
<span class="t" style="left:723.90px;transform-origin:0 0;top:774px;font-size:12.65px;font-weight:400;color:#f0f0f0;transform:scaleX(0.904);">EUR</span>
<span class="t" style="left:821.20px;transform-origin:0 0;top:774px;font-size:12.65px;font-weight:400;color:#f0f0f0;transform:scaleX(0.922);">108.69</span>
<span class="t" style="left:871.00px;transform-origin:0 0;top:774px;font-size:12.65px;font-weight:400;color:#f0f0f0;transform:scaleX(0.952);">11:22:29</span>
<span class="t" style="left:968.60px;transform-origin:0 0;top:774px;font-size:12.65px;font-weight:400;color:#f0f0f0;transform:scaleX(0.994);">open end</span>
<div style="position:absolute;left:1336.3px;top:781px;width:4.1px;height:1px;background:#f0f0f0;"></div>
<div style="position:absolute;left:1341px;top:781px;width:4px;height:1px;background:#f0f0f0;"></div>
<div style="position:absolute;left:16px;top:804px;width:16px;height:16px;border:1.5px solid #049bd0;border-radius:2px;box-sizing:border-box;"></div>
</body></html>
